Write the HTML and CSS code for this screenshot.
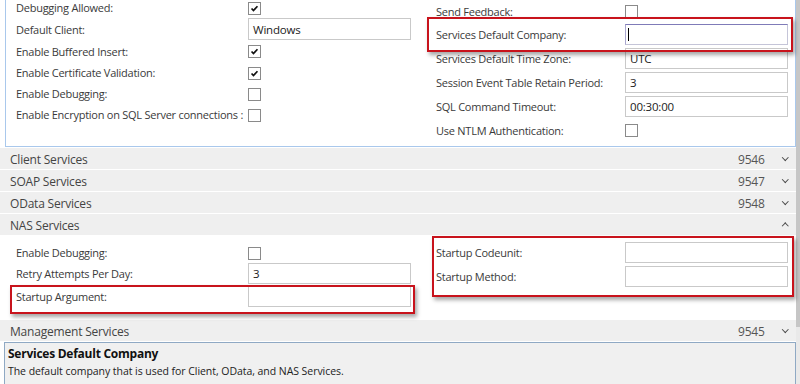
FILE: index.html
```html
<!DOCTYPE html>
<html>
<head>
<meta charset="utf-8">
<link rel="stylesheet" href="styles.css">
</head>
<body>
<div class="page">
  <div class="main">
    <div class="panel top-panel">
      <div class="col col-left">
        <div class="row r21"><span class="label">Debugging Allowed:</span><span class="cb checked"><svg viewBox="0 0 13 13"><path d="M3 6.5 L5.3 9 L10 3.8" /></svg></span></div>
        <div class="row r22"><span class="label">Default Client:</span><span class="input tall">Windows</span></div>
        <div class="row r22"><span class="label">Enable Buffered Insert:</span><span class="cb checked"><svg viewBox="0 0 13 13"><path d="M3 6.5 L5.3 9 L10 3.8" /></svg></span></div>
        <div class="row r21"><span class="label">Enable Certificate Validation:</span><span class="cb checked"><svg viewBox="0 0 13 13"><path d="M3 6.5 L5.3 9 L10 3.8" /></svg></span></div>
        <div class="row r21"><span class="label">Enable Debugging:</span><span class="cb"></span></div>
        <div class="row r21"><span class="label">Enable Encryption on SQL Server connections :</span><span class="cb"></span></div>
      </div>
      <div class="col col-right">
        <div class="row r22"><span class="label">Send Feedback:</span><span class="cb"></span></div>
        <div class="row r24"><span class="label">Services Default Company:</span><span class="input focused"><span class="caret"></span></span></div>
        <div class="row r24"><span class="label">Services Default Time Zone:</span><span class="input">UTC</span></div>
        <div class="row r24"><span class="label">Session Event Table Retain Period:</span><span class="input">3</span></div>
        <div class="row r24"><span class="label">SQL Command Timeout:</span><span class="input">00:30:00</span></div>
        <div class="row r24"><span class="label">Use NTLM Authentication:</span><span class="cb"></span></div>
      </div>
    </div>

    <div class="header"><span class="h-title">Client Services</span><span class="h-num">9546</span><span class="chev down"></span></div>
    <div class="header"><span class="h-title">SOAP Services</span><span class="h-num">9547</span><span class="chev down"></span></div>
    <div class="header"><span class="h-title">OData Services</span><span class="h-num">9548</span><span class="chev down"></span></div>
    <div class="header"><span class="h-title">NAS Services</span><span class="h-num"></span><span class="chev up"></span></div>

    <div class="nas">
      <div class="col col-left nas-left">
        <div class="row r19"><span class="label">Enable Debugging:</span><span class="cb"></span></div>
        <div class="row r22"><span class="label">Retry Attempts Per Day:</span><span class="input">3</span></div>
        <div class="row r24"><span class="label">Startup Argument:</span><span class="input tall"></span></div>
      </div>
      <div class="col col-right nas-right">
        <div class="row r24"><span class="label">Startup Codeunit:</span><span class="input"></span></div>
        <div class="row r24"><span class="label">Startup Method:</span><span class="input"></span></div>
      </div>
    </div>

    <div class="header"><span class="h-title">Management Services</span><span class="h-num">9545</span><span class="chev down"></span></div>

    <div class="desc">
      <div class="desc-title">Services Default Company</div>
      <div class="desc-text">The default company that is used for Client, OData, and NAS Services.</div>
    </div>
  </div>
  <div class="scrollbar"><div class="thumb"></div></div>

  <div class="mark mark-company"></div>
  <div class="mark mark-argument"></div>
  <div class="mark mark-startup"></div>
</div>
</body>
</html>
```

FILE: styles.css
```css
html, body {
  margin: 0;
  padding: 0;
  background: #ffffff;
}
body {
  font-family: "Open Sans", "Noto Sans", sans-serif;
  font-size: 11px;
  color: #333333;
}
.page {
  position: relative;
  display: flex;
  width: 800px;
  height: 384px;
  overflow: hidden;
}
.main {
  width: 796px;
  display: flex;
  flex-direction: column;
}
.scrollbar {
  width: 4px;
  background: #e9e9e9;
}
.thumb {
  height: 327px;
  background: #c6c6c6;
}

/* top panel */
.top-panel {
  margin-left: 5px;
  height: 148px;
  box-sizing: border-box;
  border: 1px solid #a9c8ec;
  border-top: none;
  display: flex;
  padding-left: 10px;
}
.col {
  display: flex;
  flex-direction: column;
}
.col-left {
  width: 395px;
  margin-top: -3px;
}
.col-right {
  margin-left: 25px;
  width: 352px;
}
.row {
  display: flex;
  align-items: center;
}
.r19 { height: 19px; }
.r21 { height: 21px; }
.r22 { height: 22px; }
.r24 { height: 24px; }
.col-left .label { width: 232px; flex: none; }
.col-right .label { width: 189px; flex: none; }
.label {
  white-space: nowrap;
  color: #3a3a3a;
  letter-spacing: -0.25px;
}

.cb {
  width: 13px;
  height: 13px;
  box-sizing: border-box;
  border: 1px solid #8a8a8a;
  background: #fff;
  display: inline-block;
  flex: none;
  margin-top: 1px;
}
.cb svg {
  display: block;
  width: 11px;
  height: 11px;
}
.cb svg path {
  fill: none;
  stroke: #111;
  stroke-width: 2;
}
.input {
  width: 163px;
  height: 21px;
  box-sizing: border-box;
  border: 1px solid #c9c9c9;
  background: #fff;
  padding: 0 4px;
  display: flex;
  align-items: center;
  color: #222;
  font-size: 11.5px;
  letter-spacing: -0.2px;
  flex: none;
}
.input.tall { height: 22px; }
.input.focused {
  border-color: #c5c5d8;
  border-top-color: #7f7bb8;
  border-left-color: #a9a6cf;
  padding-left: 2px;
}
.caret {
  width: 1px;
  height: 13px;
  background: #000;
}

/* section headers */
.header {
  height: 21px;
  margin-top: 1px;
  background: #efefef;
  display: flex;
  align-items: center;
  padding-left: 10px;
  padding-top: 2px;
  box-sizing: border-box;
  flex: none;
}
.h-title {
  font-size: 12px;
  letter-spacing: -0.2px;
  color: #444;
  flex: 1;
}
.h-num {
  width: 30px;
  font-size: 12px;
  letter-spacing: -0.2px;
  color: #555;
  margin-right: 14px;
}
.chev {
  width: 8px;
  height: 8px;
  margin-right: 6px;
  position: relative;
  top: -1px;
}
.chev::before {
  content: "";
  position: absolute;
  left: 1px;
  width: 3.5px;
  height: 3.5px;
  border-right: 1.8px solid #4a4a4a;
  border-bottom: 1.8px solid #4a4a4a;
}
.chev.down::before {
  top: 0px;
  transform: rotate(45deg);
}
.chev.up::before {
  top: 3px;
  transform: rotate(-135deg);
}

/* NAS */
.nas {
  height: 84px;
  flex: none;
  display: flex;
  padding-left: 16px;
  background: #fff;
}
.nas-left {
  margin-top: 8px;
}
.nas-right {
  margin-top: 7px;
}
.nas-right .row {
  align-items: flex-start;
}
.nas-right .label {
  line-height: 21px;
}

/* description */
.desc {
  margin-top: 1px;
  margin-left: 4px;
  flex: 1;
  background: #f0f0f0;
  border: 1px solid #8fa9c4;
  border-bottom: none;
  padding: 3px 3px;
}
.desc-title {
  font-weight: bold;
  font-size: 12px;
  letter-spacing: -0.25px;
  color: #111;
  line-height: 16px;
}
.desc-text {
  font-size: 10.5px;
  letter-spacing: -0.05px;
  color: #222;
  line-height: 19px;
}

/* red annotation overlays */
.mark {
  position: absolute;
  box-sizing: border-box;
  border: 2px solid #c8131c;
  box-shadow: 2px 3px 4px rgba(0, 0, 0, 0.35);
}
.mark-company {
  left: 427px;
  top: 17px;
  width: 366px;
  height: 35px;
}
.mark-argument {
  left: 10px;
  top: 285px;
  width: 405px;
  height: 29px;
}
.mark-startup {
  left: 432px;
  top: 236px;
  width: 362px;
  height: 61px;
}
```
